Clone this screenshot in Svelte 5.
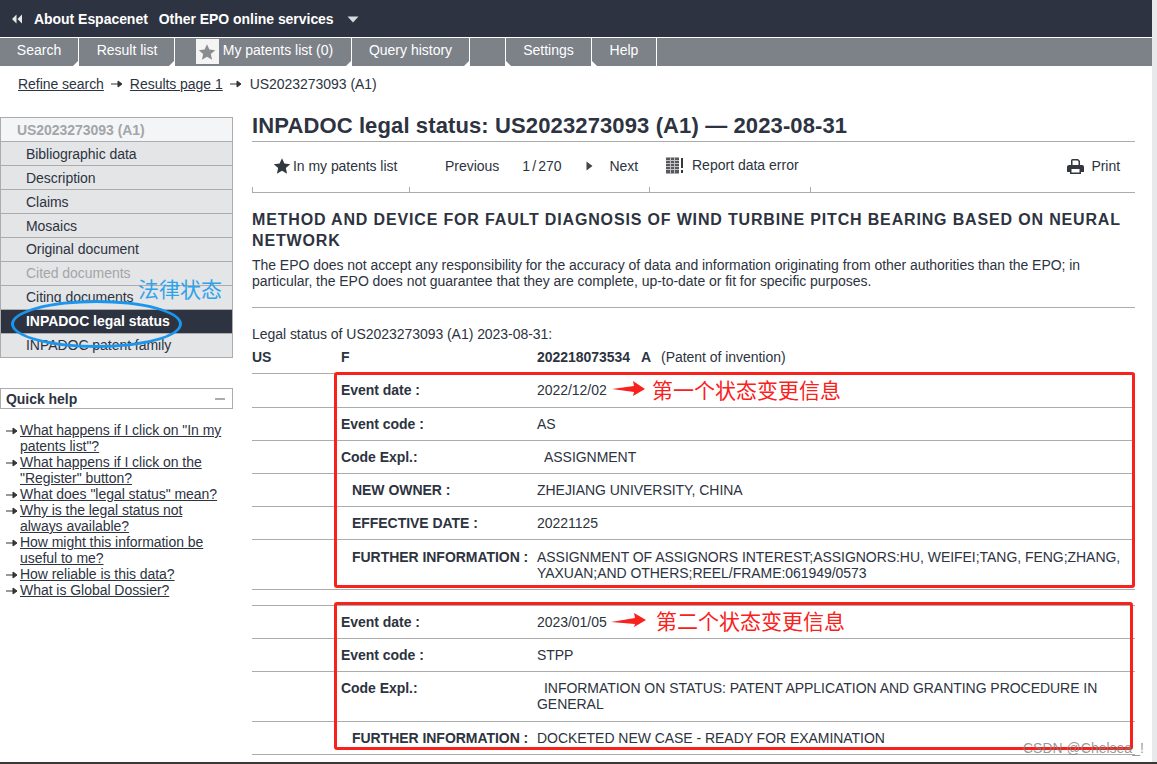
<script>
  const nav = [
    { label: 'Bibliographic data' }, { label: 'Description' }, { label: 'Claims' }, { label: 'Mosaics' },
    { label: 'Original document' }, { label: 'Cited documents', cls: 'off' }, { label: 'Citing documents' },
    { label: 'INPADOC legal status', cls: 'on' }, { label: 'INPADOC patent family' }
  ];
  const help = [
    'What happens if I click on "In my patents list"?',
    'What happens if I click on the "Register" button?',
    'What does "legal status" mean?',
    'Why is the legal status not always available?',
    'How might this information be useful to me?',
    'How reliable is this data?',
    'What is Global Dossier?'
  ];
  const rows1 = [
    ['Event date :', '2022/12/02', 34, ''],
    ['Event code :', 'AS', 33, ''],
    ['Code Expl.:', 'ASSIGNMENT', 33, 'ind'],
    ['NEW OWNER :', 'ZHEJIANG UNIVERSITY, CHINA', 33, 'sub'],
    ['EFFECTIVE DATE :', '20221125', 33, 'sub'],
    ['FURTHER INFORMATION :', 'ASSIGNMENT OF ASSIGNORS INTEREST;ASSIGNORS:HU, WEIFEI;TANG, FENG;ZHANG, YAXUAN;AND OTHERS;REEL/FRAME:061949/0573', 50, 'sub']
  ];
  const rows2 = [
    ['Event date :', '2023/01/05', 33, ''],
    ['Event code :', 'STPP', 33, ''],
    ['Code Expl.:', 'INFORMATION ON STATUS: PATENT APPLICATION AND GRANTING PROCEDURE IN GENERAL', 50, 'ind'],
    ['FURTHER INFORMATION :', 'DOCKETED NEW CASE - READY FOR EXAMINATION', 33, 'sub']
  ];
</script>

<div class="page">
  <header class="top">
    <svg class="back" width="12" height="10" viewBox="0 0 12 10"><path d="M5.5 0.5v9L1 5zM11 0.5v9L6.5 5z" fill="#e8e8e8"/></svg>
    <span class="tl first">About Espacenet</span>
    <span class="tl">Other EPO online services</span>
    <svg class="caret" width="12" height="7" viewBox="0 0 12 7"><path d="M0.5 0.5h11L6 6.5z" fill="#d8dadd"/></svg>
  </header>
  <nav class="tabs">
    <span class="tab t1">Search</span>
    <span class="tab t2">Result list</span>
    <span class="tab t3">
      <span class="starbox"><svg width="18" height="18" viewBox="0 0 24 24"><path d="M12 1.5l3.2 7.2 7.8.8-5.9 5.2 1.7 7.7L12 18.4l-6.8 4 1.7-7.7L1 9.5l7.8-.8z" fill="#8a8d90"/></svg></span>
      My patents list (0)
    </span>
    <span class="tab t4">Query history</span>
    <span class="tab t5"></span>
    <span class="tab t6">Settings</span>
    <span class="tab t7">Help</span>
  </nav>

  <div class="crumbs">
    <a href="#a">Refine search</a>
    <svg class="arr" width="12" height="8" viewBox="0 0 12 8"><path d="M0 4h8M7 1l4 3-4 3z" stroke="#333" fill="#333"/></svg>
    <a href="#b">Results page 1</a>
    <svg class="arr" width="12" height="8" viewBox="0 0 12 8"><path d="M0 4h8M7 1l4 3-4 3z" stroke="#333" fill="#333"/></svg>
    <span class="cur">US2023273093 (A1)</span>
  </div>

  <div class="cols">
    <aside class="side">
      <div class="menu">
        <div class="mh">US2023273093 (A1)</div>
        {#each nav as n}
          <div class="mi {n.cls ?? ''}">{n.label}</div>
        {/each}
      </div>
      <div class="qh"><b>Quick help</b><i></i></div>
      <ul class="help">
        {#each help as h}
          <li>
            <svg class="arr" width="12" height="8" viewBox="0 0 12 8"><path d="M0 4h8M7 1l4 3-4 3z" stroke="#333" fill="#333"/></svg>
            <a href="#h">{h}</a>
          </li>
        {/each}
      </ul>
    </aside>

    <main class="main">
      <h1>INPADOC legal status: US2023273093 (A1) — 2023-08-31</h1>
      <div class="tools">
        <div class="tc c1">
          <svg width="18" height="18" viewBox="0 0 24 24"><path d="M12 1.5l3.2 7.2 7.8.8-5.9 5.2 1.7 7.7L12 18.4l-6.8 4 1.7-7.7L1 9.5l7.8-.8z" fill="#33383f"/></svg>
          <span>In my patents list</span>
        </div>
        <div class="tc c2">
          <span>Previous</span><span class="cnt">1 / 270</span>
          <svg width="7" height="10" viewBox="0 0 7 10"><path d="M0.5 0.5v9L6.5 5z" fill="#444"/></svg>
          <span>Next</span>
        </div>
        <div class="tc c3">
          <svg width="19" height="17" viewBox="0 0 19 17"><rect x="1" y="0.5" width="13" height="16" fill="#55595d"/><path d="M1 3.5h13M1 6.5h13M1 9.5h13M1 12.5h13M5.5 0.5v16M9.5 0.5v16" stroke="#c4c4c4" stroke-width="1"/><path d="M17 1v10M17 13v3" stroke="#33383f" stroke-width="2"/></svg>
          <span>Report data error</span>
        </div>
        <div class="tc c4">
          <svg width="17" height="15" viewBox="0 0 17 15"><path fill="#33383f" fill-rule="evenodd" d="M4 1.5Q4 0 5.5 0H11l2 2v4h2q2 0 2 2v5h-3v2H3v-2H0V8q0-2 2-2h2zM5.5 1.5V6h6V2.5L10.5 1.5zM4.5 10v3.5h8V10z"/></svg>
          <span>Print</span>
        </div>
      </div>

      <h2>METHOD AND DEVICE FOR FAULT DIAGNOSIS OF WIND TURBINE PITCH BEARING BASED ON NEURAL NETWORK</h2>
      <p class="disc">The EPO does not accept any responsibility for the accuracy of data and information originating from other authorities than the EPO; in particular, the EPO does not guarantee that they are complete, up-to-date or fit for specific purposes.</p>
      <p class="ls">Legal status of US2023273093 (A1) 2023-08-31:</p>

      <div class="head">
        <b class="a">US</b><b class="b">F</b>
        <span class="c"><b>202218073534 &nbsp; A</b><span class="kind">(Patent of invention)</span></span>
      </div>
      <div class="set one">
        {#each rows1 as r}
          <div class="row" style="height:{r[2]}px">
            <span class="a"></span>
            <b class="b {r[3]}">{r[0]}</b>
            <span class="c {r[3]}">{r[1]}</span>
          </div>
        {/each}
      </div>
      <div class="gap"></div>
      <div class="set two">
        {#each rows2 as r}
          <div class="row" style="height:{r[2]}px">
            <span class="a"></span>
            <b class="b {r[3]}">{r[0]}</b>
            <span class="c {r[3]}">{r[1]}</span>
          </div>
        {/each}
      </div>
    </main>
  </div>

  <!-- Screenshot annotations drawn over the page -->
  <span class="note blue">法律状态</span>
  <span class="ellipse"></span>
  <span class="box b1"></span>
  <span class="box b2"></span>
  <svg class="redarrow ra1" width="34" height="16" viewBox="0 0 34 16"><path d="M0 8 L22 5 L21 0 L33 8 L21 15 L22 11z" fill="#f9211b"/></svg>
  <svg class="redarrow ra2" width="36" height="16" viewBox="0 0 36 16"><path d="M0 9 L24 5 L23 0 L35 7 L23 14 L24 11z" fill="#f9211b"/></svg>
  <span class="note red r1">第一个状态变更信息</span>
  <span class="note red r2">第二个状态变更信息</span>
  <span class="wm">CSDN @Chelsea_!</span>
  <div class="strip"></div>
  <div class="bottom"></div>
</div>

<style>
  :global(body) { margin: 0; background: #fff; }
  .page {
    position: relative; width: 1157px; height: 764px; overflow: hidden;
    font: 14px/16px "Liberation Sans", Arial, sans-serif; letter-spacing: -0.04px; color: #2d3340; background: #fff;
  }
  .top {
    height: 37px; background: #2d3340; color: #fff; display: flex; align-items: center;
    padding-left: 11px; box-sizing: border-box; font-weight: bold;
  }
  .tl.first { margin-left: 11px; }
  .tl { margin-right: 11px; }
  .caret { margin-left: 2px; margin-top: 1px; }
  .tabs { margin-top: 1px; height: 28px; background: #7c8288; display: flex; color: #fff; letter-spacing: 0; }
  .tab {
    display: flex; align-items: center; justify-content: center; box-sizing: border-box; height: 28px; flex: none;
    border-right: 1px solid #fff; position: relative; padding-bottom: 4px;
  }
  .t1 { width: 79px; } .t2 { width: 96px; padding-left: 1px; }
  .t3 { width: 177px; gap: 4px; padding-left: 3px; } .t4 { width: 118px; } .t5 { width: 36px; }
  .t6 { width: 86px; } .t7 { width: 65px; }
  .t1::after, .t2::after, .t3::after, .t4::after {
    content: ""; position: absolute; right: 0; bottom: 0; border-style: solid; border-width: 0 0 5px 5px;
    border-color: transparent transparent #fff transparent;
  }
  .t6::before, .t7::before {
    content: ""; position: absolute; left: 0; bottom: 0; border-style: solid; border-width: 5px 0 0 5px;
    border-color: transparent transparent transparent #fff;
  }
  .starbox {
    width: 23px; height: 25px; background: #f4f4f4; display: flex; align-items: center; justify-content: center;
    margin-top: 3px;
  }
  a { color: #2d3340; text-decoration: underline; }
  .crumbs { display: flex; align-items: center; gap: 7px; padding: 10px 0 0 18px; height: 16px; }
  .crumbs .arr { flex: none; }
  .cur { margin-left: 1px; }
  .cols { display: flex; margin-top: 23px; }
  .side { width: 233px; flex: none; margin-top: 2px; }
  .menu { border: 1px solid #acacac; box-sizing: border-box; width: 233px; }
  .mh {
    height: 23px; line-height: 25px; padding-left: 16px; font-weight: bold; color: #a3a5a9; background: #f4f5f6;
    border-bottom: 1px solid #acacac;
  }
  .mi {
    height: 23px; line-height: 24px; padding-left: 25px; background: #e4e5e7; border-bottom: 1px solid #acacac;
  }
  .mi:nth-child(n+6) { line-height: 23px; }
  .mi:last-child { border-bottom: 0; }
  .mi.off { color: #a3a5a9; }
  .mi.on { background: #2d3340; color: #fff; font-weight: bold; }
  .qh {
    margin-top: 30px; height: 21px; border: 1px solid #acacac; box-sizing: border-box; width: 233px;
    display: flex; align-items: center; justify-content: space-between; padding: 0 7px 0 5px;
  }
  .qh i { width: 10px; height: 2px; background: #acacac; }
  .help { list-style: none; margin: 13px 0 0; padding: 0 10px 0 6px; }
  .help li { position: relative; padding-left: 14px; }
  .help .arr { position: absolute; left: 0; top: 5px; }
  .main { margin-left: 19px; width: 883px; flex: none; }
  h1 {
    margin: 0; font-size: 22px; line-height: 22px; font-weight: bold; letter-spacing: 0.12px;
    border-bottom: 1px solid #acacac; height: 26px; margin-top: -1px; padding-top: 1px; box-sizing: content-box;
  }
  .tools { display: flex; height: 50px; border-bottom: 1px solid #acacac; position: relative; }
  .tc { display: flex; align-items: flex-start; padding-top: 16px; box-sizing: border-box; position: relative; }
  .tc::after { content: ""; position: absolute; left: 0; bottom: 0; height: 5px; width: 1px; background: #acacac; }
  .c1 { width: 157px; padding-left: 21px; gap: 2px; }
  .c1 svg { margin-top: -1px; }
  .c2 { width: 240px; padding-left: 36px; }
  .c2 .cnt { margin-left: 23px; margin-right: 24px; word-spacing: -1.6px; }
  .c2 svg { margin-top: 3px; margin-right: 17px; }
  .c3 { width: 161px; padding-left: 16px; gap: 8px; }
  .c3 svg { margin-top: -1px; }
  .c3 span { margin-top: -1px; letter-spacing: 0; }
  .c4 { flex: 1; justify-content: flex-end; padding-right: 15px; gap: 7px; }
  .c4 svg { margin-top: 1px; }
  h2 { margin: 16px 0 0; font-size: 16px; line-height: 21px; font-weight: bold; letter-spacing: 0.84px; color: #2d3340; }
  .disc { margin: 6px 0 0; padding-bottom: 18px; border-bottom: 1px solid #acacac; }
  .ls { margin: 18px 0 0; }
  .head { display: flex; align-items: flex-start; border-bottom: 1px solid #acacac; box-sizing: border-box; margin-top: 6px; height: 26px; padding-top: 1px; }
  .kind { margin-left: 10px; }
  .a { width: 89px; flex: none; }
  .b { width: 196px; flex: none; }
  .c { flex: 1; }
  .row { display: flex; align-items: flex-start; border-bottom: 1px solid #acacac; box-sizing: border-box; padding-top: 8px; }
  .one .row:last-child { padding-top: 9px; }
  .two .row { padding-top: 8px; }
  .row .b.sub { padding-left: 11px; box-sizing: border-box; }
  .row .c.ind { text-indent: 7px; }
  .gap { height: 15px; border-bottom: 1px solid #acacac; }
  .note { position: absolute; white-space: nowrap; font-family: "Noto Sans CJK SC", sans-serif; letter-spacing: 0; }
  .blue { left: 138px; top: 274px; font-size: 21px; line-height: 28px; color: #2fa3ea; }
  .ellipse {
    position: absolute; left: 11px; top: 300px; width: 171px; height: 48px; box-sizing: border-box;
    border: 3px solid #1b96ee; border-radius: 50%;
  }
  .box { position: absolute; border: 3px solid #f9211b; border-radius: 3px; box-sizing: border-box; }
  .b1 { left: 334px; top: 372px; width: 801px; height: 216px; }
  .b2 { left: 334px; top: 602px; width: 799px; height: 148px; }
  .redarrow { position: absolute; }
  .ra1 { left: 612px; top: 381px; }
  .ra2 { left: 611px; top: 613px; }
  .red { color: #f9211b; font-size: 21px; line-height: 28px; }
  .r1 { left: 652px; top: 375px; }
  .r2 { left: 656px; top: 606px; }
  .wm { position: absolute; left: 1023px; top: 740px; color: rgba(125,125,125,0.8); font-size: 14px; line-height: 16px; letter-spacing: 0; }
  .strip { position: absolute; right: 0; top: 0; width: 5px; height: 764px; background: #e8e9eb; }
  .bottom { position: absolute; left: 0; right: 0; bottom: 0; height: 2px; background: #3a3a32; }
</style>
